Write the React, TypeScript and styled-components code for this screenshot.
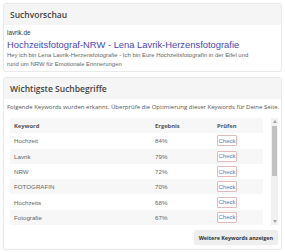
import styled, { createGlobalStyle } from "styled-components";

const GlobalStyle = createGlobalStyle`
    html, body {
        margin: 0;
        padding: 0;
        background: #ffffff;
        font-family: "Open Sans", "Liberation Sans", sans-serif;
    }
    * {
        box-sizing: border-box;
    }
`;

const Page = styled.div`
    width: 285px;
    height: 252px;
    padding: 3px 3px 0 3px;
    display: flex;
    flex-direction: column;
    gap: 5px;
    overflow: hidden;
`;

const Card = styled.div`
    flex-shrink: 0;
    border: 1px solid #e9e9e9;
    border-radius: 3px;
    background: #fff;
    box-shadow: 0 0 2px rgba(0, 0, 0, 0.04);
    overflow: hidden;
`;

const CardHeader = styled.div`
    height: 21px;
    background: #f5f5f5;
    display: flex;
    align-items: center;
    padding: 0 6px;
    font-size: 8.5px;
    font-weight: 600;
    color: #444;
`;

const PreviewBody = styled.div`
    padding: 3px 3px 2px 3px;
    font-family: "Liberation Sans", Arial, sans-serif;
`;

const Domain = styled.div`
    font-size: 6.3px;
    color: #333;
    line-height: 9px;
`;

const TitleLink = styled.a`
    display: block;
    font-size: 9.4px;
    color: #4a48b4;
    line-height: 13px;
    margin-top: 1px;
    text-decoration: none;
`;

const Description = styled.div`
    font-size: 5.95px;
    line-height: 9px;
    color: #666;
    white-space: nowrap;
`;

const KeywordBody = styled.div`
    padding: 2px 3px 4px 3px;
    display: flex;
    flex-direction: column;
`;

const Intro = styled.div`
    font-size: 6px;
    color: #555;
    line-height: 12px;
    white-space: nowrap;
`;

const TableArea = styled.div`
    margin-top: 5px;
    height: 107px;
    padding-left: 3px;
    display: flex;
    gap: 8px;
`;

const Table = styled.table`
    width: 253px;
    flex: none;
    border-collapse: collapse;
    font-size: 6.2px;
    table-layout: fixed;
    align-self: flex-start;
`;

const Col = styled.col<{ $width: number }>`
    width: ${(p) => p.$width}px;
`;

const Row = styled.tr<{ $striped: boolean }>`
    height: 15.3px;
    background: ${(p) => (p.$striped ? "#f7f7f7" : "#ffffff")};
`;

const HeadCell = styled.th`
    text-align: left;
    font-size: 5.8px;
    font-weight: 700;
    color: #555;
    padding: 0 0 0 4px;
`;

const Cell = styled.td`
    padding: 0 0 0 4px;
    color: #666;
    font-family: "Liberation Sans", Arial, sans-serif;
`;

const CheckButton = styled.button`
    font-family: "Liberation Sans", Arial, sans-serif;
    font-size: 6px;
    color: #4d7cc3;
    background: #fff;
    border: 1px solid #e3b9b9;
    border-radius: 1px;
    height: 11px;
    width: 20px;
    padding: 0;
    display: flex;
    align-items: center;
    justify-content: center;
`;

const ScrollTrack = styled.div`
    width: 7px;
    background: #f1f1f1;
    display: flex;
    flex-direction: column;
    align-items: center;
`;

const ScrollArrow = styled.div`
    height: 7px;
    width: 7px;
    display: flex;
    align-items: center;
    justify-content: center;
`;

const ScrollThumb = styled.div<{ $size: number }>`
    width: 5px;
    height: ${(p) => p.$size}px;
    background: #c1c1c1;
    margin-top: 1px;
`;

const ScrollSpace = styled.div`
    flex: 1;
`;

const Footer = styled.div`
    display: flex;
    justify-content: flex-end;
    margin-top: 5px;
`;

const MoreButton = styled.button`
    font-family: "Open Sans", sans-serif;
    font-size: 5.4px;
    font-weight: 700;
    color: #333;
    background: #eeeeee;
    border: none;
    border-radius: 2px;
    height: 15px;
    padding: 0 5px;
`;

const keywords: [string, number][] = [
    ["Hochzeit", 84],
    ["Lavrik", 79],
    ["NRW", 72],
    ["FOTOGRAFIN", 70],
    ["Hochzeits", 68],
    ["Fotografie", 67],
];

const Arrow = ({ down }: { down?: boolean }) => (
    <svg width="4" height="3" viewBox="0 0 4 3">
        <path d={down ? "M0 0 L4 0 L2 3 Z" : "M0 3 L4 3 L2 0 Z"} fill="#a3a3a3" />
    </svg>
);

export default function App() {
    return (
        <Page>
            <GlobalStyle />
            <Card>
                <CardHeader>Suchvorschau</CardHeader>
                <PreviewBody>
                    <Domain>lavrik.de</Domain>
                    <TitleLink>Hochzeitsfotograf-NRW - Lena Lavrik-Herzensfotografie</TitleLink>
                    <Description>
                        Hey ich bin Lena Lavrik-Herzensfotografie - Ich bin Eure Hochzeitsfotografin in der Eifel und
                        <br />
                        rund um NRW für Emotionale Erinnerungen
                    </Description>
                </PreviewBody>
            </Card>
            <Card>
                <CardHeader>Wichtigste Suchbegriffe</CardHeader>
                <KeywordBody>
                    <Intro>
                        Folgende Keywords wurden erkannt. Überprüfe die Optimierung dieser Keywords für Deine Seite.
                    </Intro>
                    <TableArea>
                        <Table>
                            <colgroup>
                                <Col $width={141} />
                                <Col $width={62} />
                                <Col $width={50} />
                            </colgroup>
                            <thead>
                                <Row $striped>
                                    <HeadCell>Keyword</HeadCell>
                                    <HeadCell>Ergebnis</HeadCell>
                                    <HeadCell>Prüfen</HeadCell>
                                </Row>
                            </thead>
                            <tbody>
                                {keywords.map(([word, score], i) => (
                                    <Row key={word} $striped={i % 2 === 1}>
                                        <Cell>{word}</Cell>
                                        <Cell>{score}%</Cell>
                                        <Cell>
                                            <CheckButton>Check</CheckButton>
                                        </Cell>
                                    </Row>
                                ))}
                            </tbody>
                        </Table>
                        <ScrollTrack>
                            <ScrollArrow>
                                <Arrow />
                            </ScrollArrow>
                            <ScrollThumb $size={50} />
                            <ScrollSpace />
                            <ScrollArrow>
                                <Arrow down />
                            </ScrollArrow>
                        </ScrollTrack>
                    </TableArea>
                    <Footer>
                        <MoreButton>Weitere Keywords anzeigen</MoreButton>
                    </Footer>
                </KeywordBody>
            </Card>
        </Page>
    );
}
